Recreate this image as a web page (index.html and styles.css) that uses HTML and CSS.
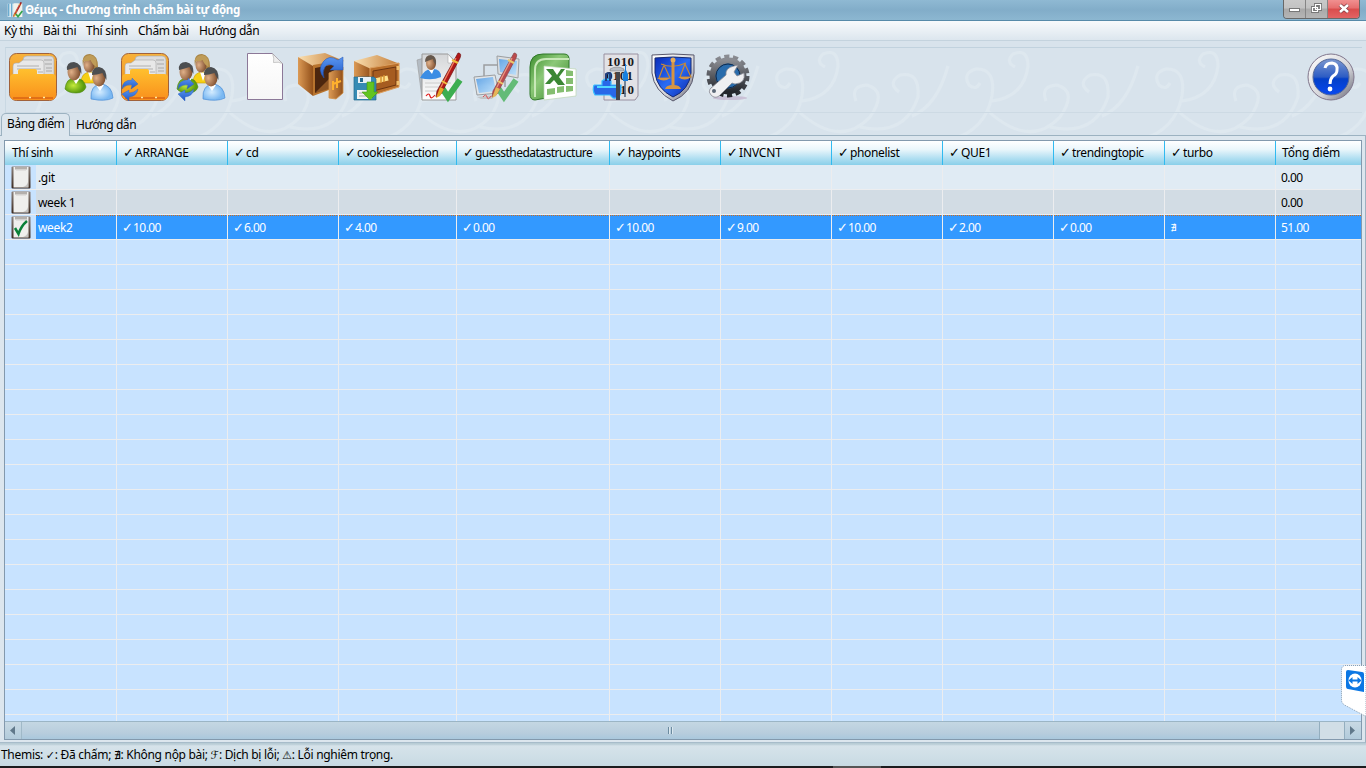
FILE: index.html
```html
<!DOCTYPE html>
<html lang="vi">
<head>
<meta charset="utf-8">
<title>Θέμις - Chương trình chấm bài tự động</title>
<link rel="stylesheet" href="styles.css">
</head>
<body>
<svg class="defs" width="0" height="0" aria-hidden="true">
<defs>
<linearGradient id="org" x2="0" y2="1"><stop offset="0" stop-color="#f8b23a"/><stop offset="1" stop-color="#ef8a12"/></linearGradient>
<linearGradient id="org2" x2="0" y2="1"><stop offset="0" stop-color="#ffc02e"/><stop offset="1" stop-color="#f98f1c"/></linearGradient>
<radialGradient id="face" cx=".3" cy=".5" r=".7"><stop offset="0" stop-color="#e0b088"/><stop offset="1" stop-color="#7c4c2c"/></radialGradient>
<radialGradient id="green" cx=".4"><stop offset="0" stop-color="#c4ea3c"/><stop offset="1" stop-color="#5a9c0e"/></radialGradient>
<radialGradient id="sky" cx=".4"><stop offset="0" stop-color="#d4ecff"/><stop offset="1" stop-color="#7ab8f2"/></radialGradient>
<linearGradient id="wood"><stop offset="0" stop-color="#dc9a55"/><stop offset="1" stop-color="#92501a"/></linearGradient>
<linearGradient id="woodtop"><stop offset="0" stop-color="#fbe0b0"/><stop offset="1" stop-color="#c07834"/></linearGradient>
<linearGradient id="paper" x2="0" y2="1"><stop offset="0" stop-color="#d4d6d8"/><stop offset="1" stop-color="#fff"/></linearGradient>
<linearGradient id="blank" x2="0" y2="1"><stop offset="0" stop-color="#fff"/><stop offset="1" stop-color="#f6f6f6"/></linearGradient>
<linearGradient id="xl" x2="1" y2="1"><stop offset="0" stop-color="#3c8e2c"/><stop offset=".4" stop-color="#8cc878"/><stop offset="1" stop-color="#2f8222"/></linearGradient>
<linearGradient id="shield" x2="1" y2="1"><stop offset="0" stop-color="#0a2cb8"/><stop offset=".5" stop-color="#2a6cf4"/><stop offset="1" stop-color="#0a28b0"/></linearGradient>
<linearGradient id="silver" x2="1" y2="1"><stop offset="0" stop-color="#fff"/><stop offset=".6" stop-color="#d4d4d8"/><stop offset="1" stop-color="#606070"/></linearGradient>
<linearGradient id="gear" x2="0" y2="1"><stop offset="0" stop-color="#8a8c92"/><stop offset="1" stop-color="#24262c"/></linearGradient>
<linearGradient id="qblue" x2="0" y2="1"><stop offset="0" stop-color="#7c98d0"/><stop offset=".5" stop-color="#2c5cc4"/><stop offset=".55" stop-color="#0440c8"/><stop offset="1" stop-color="#0848f0"/></linearGradient>
<linearGradient id="arr" x2="0" y2="1"><stop offset="0" stop-color="#5a96f0"/><stop offset="1" stop-color="#1f58c8"/></linearGradient>
<linearGradient id="screen" x2="1" y2="1"><stop offset="0" stop-color="#3f92e4"/><stop offset="1" stop-color="#b8e0ff"/></linearGradient>
<linearGradient id="board" x2="0" y2="1"><stop offset="0" stop-color="#8c827c"/><stop offset="1" stop-color="#3c2a20"/></linearGradient>
<g id="folder">
<rect x=".5" y=".5" width="47" height="47" rx="7" fill="url(#org)" stroke="#a0623c"/>
<rect x="14" y="3" width="31" height="30" rx="4" fill="#dcdcdc" stroke="#aaa" stroke-width=".6"/>
<path d="M35 7h8M36 11h7M37 15h6M37 18h6" stroke="#a8a8a8" stroke-width="1.2"/>
<path d="M4 31V13q0-3 3-3h3l4-3h18q3 0 3 3v21z" fill="#e8e8e8" stroke="#aaa" stroke-width=".6"/>
<path d="M8 13h22M8 16h24M29 19h5" stroke="#b0b0b0" stroke-width="1"/>
<path d="M1 25q0-4 4-4h4v-3q0-2 2-2h15q2 0 2 2v3h15q4 0 4 4v16q0 6-6 6H7q-6 0-6-6z" fill="url(#org2)"/>
<path d="M4 45h40" stroke="#c84c10" stroke-width="1"/><path d="M20 44.5h2M34 44.5h2" stroke="#ffe9a0" stroke-width="1.5"/>
</g>
<g id="people">
<path d="M16 30q0-11 10-11t9 11z" fill="#f6cf14" stroke="#c89c08" stroke-width=".6"/><path d="M23 19l3 9 3-8z" fill="#fff"/>
<path d="M18 13Q16 1 25 1q8 1 8 13-3 4-5 2V8h-9z" fill="#a88444"/><ellipse cx="24" cy="12" rx="5.500" ry="7.500" fill="url(#face)"/><path d="M17.500 8q2-6 8-6 7 1 6 12-4-2-6-7-3 2-8 1" fill="#bf9c58"/>
<path d="M0 36q1-11 10-11t11 9q-2 6-10 6T0 36" fill="url(#green)" stroke="#4c8410" stroke-width=".6"/><path d="M7 25l4 6 4-6z" fill="#fff"/>
<ellipse cx="9" cy="19" rx="6.500" ry="8.500" fill="url(#face)"/><path d="M2 17Q1 9 9 9q8 1 7.500 12-3-4-4-7-6 2-10.500 3" fill="#4c4e50"/>
<path d="M26 46q-1-14 10-15 11 1 12 14-8 4-22 1" fill="url(#sky)" stroke="#4d8ed6" stroke-width=".7"/><path d="M31 32l4 6 4-6z" fill="#fff"/>
<ellipse cx="34" cy="25" rx="6.500" ry="8.500" fill="url(#face)"/><path d="M27 22q0-8 7-8 8 1 7.500 13-3-4-4-7-6 2-10.500 2" fill="#4c4e50"/>
</g>
<g id="sync" fill="url(#arr)" stroke="#2a60c0" stroke-width=".4">
<path d="M1 36q0-9 10-9v-2l6 6-7 5 1-4q-6-1-10 4"/><path d="M17 36q-1 7-9 8v4l-7-7 7-4v3q5 0 9-4"/>
</g>
<g id="pen"><path d="M41 0q4 0 2 5L24 41l-5 3 1-6z" fill="#b01818" stroke="#701010" stroke-width=".7"/><path d="M39 5 24 34" stroke="#f08060" stroke-width="1.3"/><path d="M35 7l6 3M25 28l5 3" stroke="#f0c040" stroke-width="2"/><path d="M23 34l4 2-4 7-4 2z" fill="#e6a828"/></g>
<g id="clip"><rect x=".5" y=".5" width="19" height="22" rx="1" fill="url(#board)"/><path d="M2.500 1h15v20.500h-15z" fill="#efefed"/><path d="M4 .5h12v3H4z" fill="#b4b0ac"/><path d="M5 4h10" stroke="#d4d2d0"/><path d="M12 21q4-1 5-5v5z" fill="#c4c2c0"/></g>
<pattern id="flourish" width="190" height="116" patternUnits="userSpaceOnUse">
<g fill="none" stroke="#e2ebf2" stroke-width="3" opacity=".65">
<path d="M-5 100Q35 92 42 55q4-28-16-27-14 4-7 16 7 6 11-2"/><path d="M42 60q32-4 36-35 0-18-15-12-8 8 2 13"/>
<path d="M38 70q42 38 72 6 18-26-3-32-17 1-11 16"/><path d="M100 86q45 10 58-30 2-26-18-22-13 8-1 17"/><path d="M152 75q25-10 36-50"/>
</g></pattern>
</defs>
</svg>

<div class="window">
<header class="titlebar">
<svg class="app" width="16" height="16" viewBox="0 0 48 48"><path d="M2 5h30v40H2z" fill="#d9eaf2"/><path d="M5 5v38M14 4v40" stroke="#6cacd0" stroke-width="4"/><path d="M20 4h26v41H20z" fill="#f2f2ea"/><use href="#pen"/><path d="M27 36l6 8L46 27" fill="none" stroke="#32a44a" stroke-width="5"/></svg>
<h1>Θέμις - Chương trình chấm bài tự động</h1>
<div class="controls">
<span class="ctl min"><svg width="22" height="18"><rect x="5.500" y="8.500" width="10" height="3" fill="#fff" stroke="#777"/></svg></span>
<span class="ctl max"><svg width="22" height="18" fill="none"><path d="M9.500 4.500h5v5h-5zM6.500 7.500h5v4h-5z" stroke="#777" stroke-width="3"/><path d="M9.500 4.500h5v5h-5zM6.500 7.500h5v4h-5z" stroke="#fff" stroke-width="1.200"/></svg></span>
<span class="ctl close"><svg width="32" height="18"><path d="M12 5l8 7M20 5l-8 7" stroke="#7c3840" stroke-width="4"/><path d="M12 5l8 7M20 5l-8 7" stroke="#fff" stroke-width="2.600"/></svg></span>
</div>
</header>
<nav class="menu"><span class="m1">Kỳ thi</span><span class="m2">Bài thi</span><span class="m3">Thí sinh</span><span class="m4">Chấm bài</span><span class="m5">Hướng dẫn</span></nav>
<svg class="swirls" width="1366" height="94"><rect width="1366" height="94" fill="url(#flourish)"/></svg>

<div class="toolbar">
<div class="group">
<svg class="icon" viewBox="0 0 48 48"><use href="#folder"/></svg>
<svg class="icon" viewBox="0 0 48 48"><use href="#people"/></svg>
<svg class="icon" viewBox="0 0 48 48"><use href="#folder"/><use href="#sync"/></svg>
<svg class="icon" viewBox="0 0 48 48"><use href="#people"/><use href="#sync"/></svg>
</div>
<div class="group">
<svg class="icon" viewBox="0 0 48 48"><path d="M6.500.5h25l10 10v36h-35z" fill="url(#blank)" stroke="#8c7898"/><path d="M31.500.5q2 5 1 9 5-1 9 1z" fill="#eee" stroke="#aaa" stroke-width=".6"/></svg>
<svg class="icon" viewBox="0 0 48 48"><path d="M1 4 28 0l19 8-30 6z" fill="url(#woodtop)"/><path d="M1 4l15 9v30L1 31z" fill="url(#wood)"/><path d="M16 12l29-5v25L16 43z" fill="#b8742e"/><path d="M18 15l26-5v20L18 40z" fill="#4c260e"/><path d="M18 40l14-14v10z" fill="#8f5624"/><path d="M32 20l14-6v26l-7 6-7-1z" fill="url(#wood)" stroke="#d09048" stroke-width=".8"/><path d="M40 25v10M36 31l8-3M36 28v9" stroke="#ffb12e" stroke-width="2" fill="none"/><path d="M27 25q-7-8-1-16Q32 1 41 7l5-3v13H33l4-4q-6-3-9 1-3 5-1 11" fill="url(#arr)" stroke="#2454b0" stroke-width=".5"/></svg>
<svg class="icon" viewBox="0 0 48 48"><path d="M1 8 24 2l23 9-29 6z" fill="url(#woodtop)"/><path d="M1 8l17 8v27L1 31z" fill="url(#wood)"/><path d="M17 15l29-5v24L17 43z" fill="#b86e2a" stroke="#dca060"/><path d="M20 18l23-4v18l-23 6z" fill="#a65c20" stroke="#6c3510"/><path d="M22 28l13-3" stroke="#ffe28c" stroke-width="5"/><path d="M28 23v7M31 22v7" stroke="#d89230" stroke-width="1.500"/><path d="M45 13v4M45 28v4" stroke="#f0c070" stroke-width="3"/><path d="M1 24h20l2 2v21H1z" fill="#368bb4" stroke="#246a90" stroke-width=".7"/><path d="M5 24h13v6H5z" fill="#e6f0f6"/><path d="M7 25h3v4H7z" fill="#246a90"/><path d="M4 37h15v9H4z" fill="#f4f4f4"/><path d="M6 40h11M6 43h11" stroke="#aaa"/><path d="M14 29h7v10h4l-8 8-8-8h5z" fill="#62c422" stroke="#459c14" stroke-width=".6"/></svg>
</div>
<div class="group">
<svg class="icon" viewBox="0 0 48 48"><path d="M0 7l7-2 3 40H5z" fill="#b4bcc4" stroke="#999" stroke-width=".6"/><path d="M5 1h26l8 8v38H5z" fill="url(#paper)" stroke="#999"/><path d="M31 1v9h8z" fill="#fff" stroke="#aaa" stroke-width=".6"/><path d="M8 30h26M8 34h20M8 38h18" stroke="#ccc"/><path d="M3 25q5-10 13-9 8 0 8 8-9 4-21 1" fill="#3b8de4"/><path d="M11 16l4 5 2-5z" fill="#fff"/><ellipse cx="14" cy="10" rx="5" ry="7" fill="url(#face)"/><path d="M8 9q0-7 6-7 6 1 5 10-3-3-3-6-3 1-8 3" fill="#66584c"/><path d="M25 35l6 9L43 27" fill="none" stroke="#3dae50" stroke-width="6"/><use href="#pen"/><path d="M9 43q3-4 4 0t5-1" fill="none" stroke="#e02020" stroke-width="1.200"/></svg>
<svg class="icon faded" viewBox="0 0 48 48"><path d="M11 23V12h15M32 27v7" stroke="#888" fill="none" stroke-width="1.500"/><path d="M24 3l22 3-1 19-20-4z" fill="#ddd" stroke="#888"/><path d="M26 6l18 2-1 14-16-3z" fill="url(#screen)"/><path d="M1 24l21-2 4 18-22 2z" fill="#e6e6e6" stroke="#888"/><path d="M3 26l17-2 3 14-17 2z" fill="url(#screen)"/><path d="M4 44l18-2-3 4H8z" fill="#bbb"/><path d="M25 35l6 9L43 27" fill="none" stroke="#3dae50" stroke-width="6"/><use href="#pen"/><path d="M10 44q3-4 4 0t4-1" fill="none" stroke="#e02020"/></svg>
<svg class="icon" viewBox="0 0 48 48"><path d="M1 14Q1 1 14 1h21q5 0 5 5v35L6 47q-5 0-5-6z" fill="url(#xl)" stroke="#2f7828"/><path d="M6 44V17Q6 6 17 6h23" fill="none" stroke="#c8e8b8" stroke-width="2"/><path d="M15 13l32 3v27l-32 4z" fill="#fff" stroke="#bcd6b4" stroke-width=".7"/><path d="M37 17l7 1v5h-7zM37 25h7v6h-7zM37 33h7v5l-7 1zM18 36l8-1v6l-8 1zM28 34l7-1v6l-7 1z" fill="#85be70"/><path d="M17 16h7l4 6 4-6h4l-6 8 6 8h-7l-4-5-4 4h-5l7-8z" fill="#3b8734"/></svg>
</div>
<div class="group">
<svg class="icon" viewBox="0 0 48 48"><path d="M11 1h34v42l-3 4H11z" fill="#e2e2e6" stroke="#9890a0"/><g class="bits"><text x="14" y="13" textLength="27">1010</text><text x="13" y="27" textLength="27">0101</text><text x="27" y="41" textLength="14">10</text></g><path d="M1 32h8v-4q5-4 9 0v4h10v7q-1 7-8 6l-3-3H2q-3-5-1-10" fill="#2868e8" stroke="#38c0ff" stroke-width="1.200"/><path d="M4 34h21" stroke="#50d8ff" stroke-width="2"/><path d="M13 28v-7q3-2 4 0v7" fill="none" stroke="#204080" stroke-width="2"/><path d="M23 19h4v28h-4z" fill="#44464c"/><path d="M17 16q7-4 14 0v2H17z" fill="#b8bcc4" stroke="#777" stroke-width=".5"/><path d="M32 11v6l-2 4v7h5v-7l-2-4v-6z" fill="#1880e0"/><path d="M32 28v16" stroke="#50647c" stroke-width="1.500"/></svg>
<svg class="icon" viewBox="0 0 48 48"><path d="M3 2q21-2 42 0v18q-2 20-21 28Q5 38 3 20z" fill="url(#silver)" stroke="#58586c"/><path d="M6 5q18-2 36 0v15q-2 17-18 24Q8 36 6 20z" fill="url(#shield)" stroke="#172a70"/><path d="M12 11q12 5 25-1M15 12l-5 13h11zM36 11l-5 13h11z" stroke="#c48838" stroke-width="1.200" fill="none"/><path d="M24 8v26" stroke="#d89440" stroke-width="3"/><path d="M8 25h13q-6 5-13 0M29 24h13q-6 5-13 0M16 36q1-4 8-4t8 4z" fill="#d69645"/><circle cx="24" cy="7" r="2.500" fill="#e6ad58"/></svg>
<svg class="icon" viewBox="0 0 48 48"><ellipse cx="25" cy="45" rx="17" ry="2" fill="#b89cbe" opacity=".5"/><circle cx="23" cy="23" r="19.500" fill="none" stroke="url(#gear)" stroke-width="4" stroke-dasharray="5.200 3.552"/><circle cx="23" cy="23" r="15.500" fill="#1f5c96" stroke="url(#gear)" stroke-width="6"/><circle cx="23" cy="23" r="12" fill="#2a6cac" stroke="#102c50"/><path d="M5 36l16-14q-1-7 8-9l4-1-4 7 3 4 7-3q2 10-9 11l-3-1-13 13q-4 3-8-1-3-3-1-6" fill="#f0f0f2" stroke="#8a8c96" stroke-width=".8"/><circle cx="9" cy="38" r="2" fill="#5c6878"/></svg>
</div>
<svg class="icon help" viewBox="0 0 48 48"><circle cx="24" cy="24" r="23" fill="url(#silver)" stroke="#80768c"/><circle cx="24" cy="24" r="18" fill="url(#qblue)" stroke="#546898"/><path d="M18 15q1-5 7-5 6 1 5 7 0 4-4 6-3 3-3 8" fill="none" stroke="#fff" stroke-width="3"/><circle cx="23" cy="36" r="2.400" fill="#fff"/></svg>
</div>

<div class="tabs"><span class="tab active">Bảng điểm</span><span class="tab other">Hướng dẫn</span></div>

<main class="panel">
<div class="table">
<div class="row head"><span class="first">Thí sinh</span><span><i>✓</i>ARRANGE</span><span><i>✓</i>cd</span><span class="tight"><i>✓</i>cookieselection</span><span class="tighter"><i>✓</i>guessthedatastructure</span><span class="tight"><i>✓</i>haypoints</span><span><i>✓</i>INVCNT</span><span class="tight"><i>✓</i>phonelist</span><span class="tight"><i>✓</i>QUE1</span><span class="tight"><i>✓</i>trendingtopic</span><span class="tight"><i>✓</i>turbo</span><span>Tổng điểm</span></div>
<div class="row data light"><span class="name"><svg width="20" height="24"><use href="#clip"/></svg><b>.git</b></span><span></span><span></span><span></span><span></span><span></span><span></span><span></span><span></span><span></span><span></span><span>0.00</span></div>
<div class="row data dark"><span class="name"><svg width="20" height="24"><use href="#clip"/></svg><b>week 1</b></span><span></span><span></span><span></span><span></span><span></span><span></span><span></span><span></span><span></span><span></span><span>0.00</span></div>
<div class="row data selected"><span class="name"><svg width="20" height="24"><use href="#clip"/><path d="M4 12l3.500 6Q10 10 16 5" fill="none" stroke="#098038" stroke-width="2.500"/></svg><b>week2</b></span><span><i>✓</i>10.00</span><span><i>✓</i>6.00</span><span><i>✓</i>4.00</span><span><i>✓</i>0.00</span><span><i>✓</i>10.00</span><span><i>✓</i>9.00</span><span><i>✓</i>10.00</span><span><i>✓</i>2.00</span><span><i>✓</i>0.00</span><span><em>∄</em></span><span>51.00</span></div>
<div class="row filler"><span></span><span></span><span></span><span></span><span></span><span></span><span></span><span></span><span></span><span></span><span></span><span></span></div>
<div class="scroll">
<span class="arrow"><svg width="17" height="17"><path d="M10 4v9L5 8.500z" fill="#60788a"/></svg></span>
<span class="thumb"><i></i><i></i></span><span class="track"></span>
<span class="arrow right"><svg width="17" height="17"><path d="M5 4v9l5-4.500z" fill="#60788a"/></svg></span>
</div>
</div>
</main>
<footer class="status"><span>Themis: <i>✓</i>: Đã chấm; <i>∄</i>: Không nộp bài; <i>ℱ</i>: Dịch bị lỗi; <i>⚠</i>: Lỗi nghiêm trọng.</span></footer>
<div class="taskbar"><span></span></div>
</div>
<div class="viewer"><svg width="25" height="52"><path d="M25 .5H4Q.5 1 .5 5v30q0 3 3 5L25 51.500z" fill="#fff" stroke="#8aa0b4" stroke-dasharray="1 1"/><path d="M7 5l14 2q2 0 2 2v18L7 24q-2 0-2-3V7q0-2 2-2" fill="#0b77e4"/><ellipse cx="14" cy="15.500" rx="6.500" ry="7" fill="#fff"/><path d="M7.500 15.500l4-3.500v2.500h5V12l4 3.500-4 3.500v-2.500h-5V19z" fill="#0b77e4"/></svg></div>
</body>
</html>
```
FILE: styles.css
```css
* { box-sizing: border-box; }
body {
  margin: 0;
  width: 1366px;
  height: 768px;
  overflow: hidden;
  position: relative;
  font: 12px/16px "Noto Sans", "Open Sans", "DejaVu Sans", sans-serif;
  color: #000;
}
.defs { position: absolute; }
.window {
  display: flex;
  flex-direction: column;
  height: 768px;
  background: #d8e3ec;
}
.titlebar {
  height: 21px;
  display: flex;
  flex: none;
  align-items: flex-start;
  padding: 0 6px 0 7px;
  background: linear-gradient(#8fb9d3, #82adc9 50%, #8cb7d1);
  border-bottom: 1px solid #568aa9;
}
.app { margin-top: 2px; flex: none; }
.titlebar h1 {
  margin: 2px 0 0 2px;
  flex: 1;
  color: #fff;
  font: bold 11.500px/16px "Noto Sans", sans-serif;
  letter-spacing: -.25px;
  white-space: nowrap;
}
.controls {
  display: flex;
  height: 19px;
  border: 1px solid #686868;
  border-top: 0;
  border-radius: 0 0 4px 4px;
  overflow: hidden;
}
.ctl { width: 22px; background: linear-gradient(#c9c9c9, #c2c2c2 45%, #a9a9a9 50%, #b5b5b5); border-right: 1px solid #858585; }
.ctl svg { display: block; }
.close { width: 31px; border: 0; background: linear-gradient(#f09090, #e66e6e 45%, #d94c4c 50%, #e36464); }
.menu {
  height: 20px;
  flex: none;
  display: flex;
  padding: 2px 0 0 4px;
  background: linear-gradient(#f8fafc, #dce6ee);
  border-bottom: 1px solid #c4d3de;
  white-space: nowrap;
}
.m1 { width: 39px; letter-spacing: -.45px; }
.m2 { width: 43px; letter-spacing: -.35px; }
.m3 { width: 52px; letter-spacing: -.25px; }
.m4 { width: 61px; letter-spacing: -.3px; }
.m5 { letter-spacing: -.4px; }
.swirls { position: absolute; left: 0; top: 41px; }
.toolbar {
  position: relative;
  height: 66px;
  flex: none;
  margin: 6px 4px 0 5px;
  padding: 5px 7px 0 3px;
  display: flex;
  gap: 16px;
  border-top: 1px solid #c1d2de;
  border-left: 1px solid #c9d8e3;
  border-bottom: 1px solid #cddae4;
}
.group { display: flex; gap: 8px; }
.icon { width: 48px; height: 48px; flex: none; display: block; overflow: visible; }
.faded { opacity: .75; }
.help { margin-left: auto; }
.bits { font: bold 13px "Liberation Serif", serif; fill: #181820; }
.tabs {
  position: relative;
  height: 23px;
  flex: none;
  display: flex;
  border-bottom: 1px solid #9cb2c1;
  padding-left: 1px;
  white-space: nowrap;
}
.tab.active {
  width: 69px;
  height: 23px;
  padding: 2px 0 0 5px;
  background: #dce6ee;
  border: 1px solid #9cb2c1;
  border-bottom: 0;
  border-radius: 5px 5px 0 0;
  letter-spacing: -.4px;
}
.tab.other { padding: 4px 6px; letter-spacing: -.4px; }
.panel { height: 607px; flex: none; padding: 4px 4px 0; background: #dce6ee; border-bottom: 1px solid #a7bcca; border-right: 1px solid #9cb2c1; }
.table { height: 600px; width: 1358px; display: flex; flex-direction: column; border: 1px solid #8399ad; background: #c8e3ff; }
.row {
  display: grid;
  grid-template-columns: 112px 111px 111px 118px 153px repeat(6, 111px) 85px;
  flex: none;
}
.row > span { display: flex; border-right: 1px solid #ecedef; padding-left: 5px; white-space: nowrap; letter-spacing: -.55px; }
.row > span:last-child { border-right: 0; }
.row i { font: normal 13px/16px "DejaVu Sans", sans-serif; width: 11px; letter-spacing: 0; }
.row em { font: normal 10px/16px "DejaVu Sans", sans-serif; }
.head { height: 24px; background: linear-gradient(#fff, #eaf6fb 35%, #b4e0f2 70%, #89cfe9); }
.head > span { padding: 4px 0 0 6px; border-right-color: #31baf0; letter-spacing: -.15px; }
.head > .first { padding-left: 7px; letter-spacing: -.35px; }
.head > .tight { letter-spacing: -.35px; }
.head > .tighter { letter-spacing: -.52px; }
.head > span > i { margin-right: 1px; }
.data { height: 25px; border-bottom: 1px solid #ecedef; }
.data > span { padding-top: 5px; }
.data > .name { padding: 0 0 0 6px; background: linear-gradient(#c8e3ff, #c8e3ff) 0 0 / 31px 24px no-repeat; }
.name svg { flex: none; margin-top: 1px; }
.name b { font-weight: normal; padding: 5px 0 0 2px; margin-left: 5px; flex: 1; letter-spacing: -.35px; }
.light { background: #e0ebf4; }
.dark { background: #d2dce4; }
.selected { background: #3399ff; color: #fff; }
.selected > span, .selected b { background-image: linear-gradient(90deg, #cc6e20 50%, transparent 50%); background-size: 2px 1px; background-repeat: repeat-x; }
.selected > .name { background: linear-gradient(#c8e3ff, #c8e3ff) 0 0 / 31px 24px no-repeat; }
.filler { flex: 1; background: repeating-linear-gradient(transparent 0 24px, #ecedef 24px 25px); }
.scroll { height: 18px; flex: none; display: flex; border-top: 1px solid #9bb5c5; background: #d1dee6; }
.arrow { width: 17px; background: linear-gradient(#c8d9e4, #b2cbdb); border-right: 1px solid #a0b9c8; }
.arrow svg { display: block; }
.right { border-right: 0; border-left: 1px solid #93aebf; }
.thumb { width: 1298px; display: flex; gap: 1px; justify-content: center; align-items: center; background: linear-gradient(#c4d7e3, #b8cddd 65%, #a9c8dd); border-right: 1px solid #93aebf; }
.thumb i { width: 2px; height: 7px; border-left: 1px solid #6c8ba0; border-right: 1px solid #dce8ef; }
.track { flex: 1; }
.status { height: 23px; flex: none; padding: 4px 0 0 1px; background: linear-gradient(#b8ccd5 0 1px, #d6e3ea 3px, #c8dae3); white-space: nowrap; letter-spacing: -.3px; }
.status i { font: normal 11px/16px "DejaVu Sans", sans-serif; }
.taskbar { height: 2px; background: #1c1c1e; padding-left: 833px; }
.taskbar span { display: block; width: 48px; height: 2px; background: #555; }
.viewer { position: absolute; left: 1341px; top: 665px; width: 25px; height: 52px; }
.viewer svg { display: block; }
```
